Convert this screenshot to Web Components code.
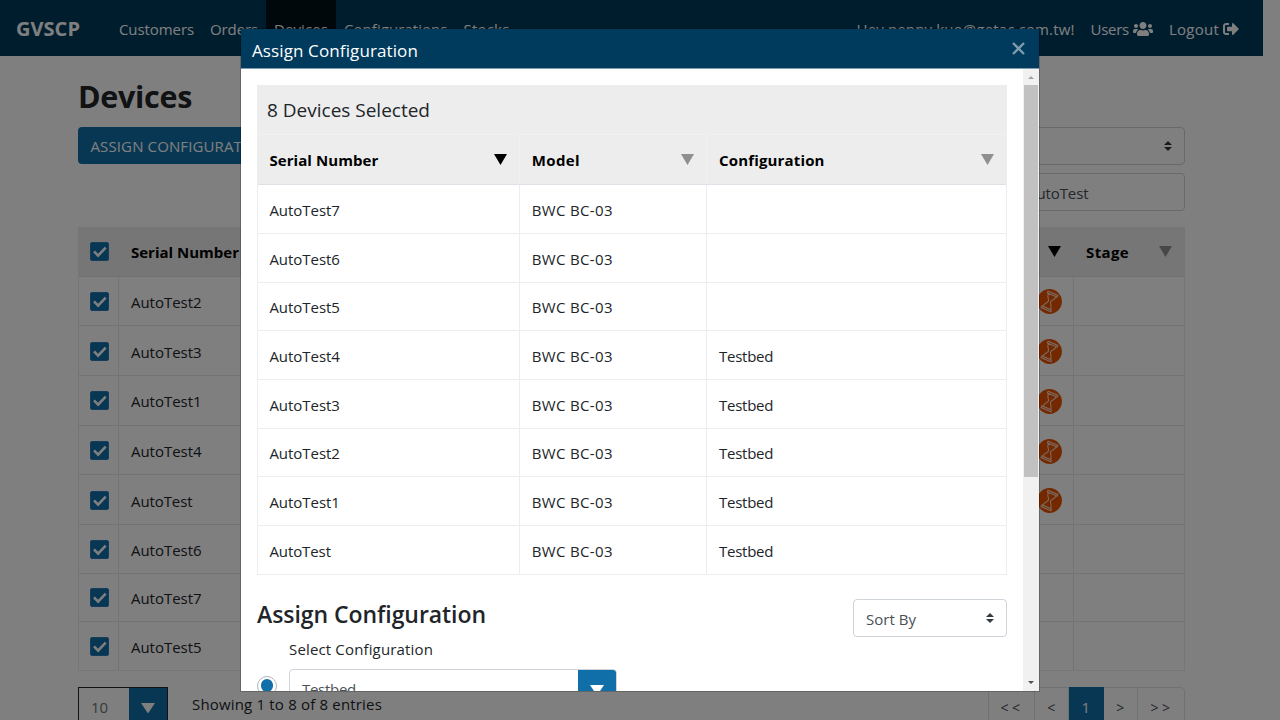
<!DOCTYPE html>
<html lang="en">
<head>
<meta charset="utf-8">
<title>GVSCP - Devices</title>
<style>
html,body{margin:0;height:720px;overflow:hidden;background:#fff}
body{font:400 15px/24px "Open Sans","Noto Sans",sans-serif;color:#212529}
</style>
</head>
<body>
<device-page></device-page>
<modal-layer></modal-layer>

<script>
function define(name, html) {
  const t = document.createElement('template');
  t.innerHTML = html;
  customElements.define(name, class extends HTMLElement {
    constructor() {
      super();
      this.attachShadow({ mode: 'open' }).append(t.content.cloneNode(true));
    }
  });
}

const caret = '<svg viewBox="0 0 4 5" width="8" height="10"><path fill="#343a40" d="M2 0L0 2h4zm0 5L0 3h4z"/></svg>';

define('check-box', `<style>:host{display:block;width:17px;height:17px;border:1px solid #2b7db8;border-radius:2px;background:#106ea8}svg{display:block}</style>
<svg width="17" height="17" viewBox="0 0 17 17"><path d="M3 8.4l4.1 4.2 7.6-8" fill="none" stroke="#fff" stroke-width="2.6"/></svg>`);

define('stage-icon', `<style>:host{display:block;width:25px;height:25px;margin-right:-1px}svg{display:block}</style>
<svg width="25" height="25" viewBox="0 0 25 25"><circle cx="12.5" cy="12.5" r="12.4" fill="#e65100"/>
<g transform="rotate(23 12.5 12.5)" fill="none" stroke="#fff" stroke-opacity=".75" stroke-width="1.1"><path d="M7.2 3.6h10.6v1.9H7.2zM7.2 19.5h10.6v1.9H7.2zM8.3 5.5c0 4 3 5 3 7s-3 3-3 7M16.7 5.5c0 4-3 5-3 7s3 3 3 7"/></g></svg>`);

define('sort-mark', `<style>:host{display:block;width:13px;height:11px;color:#8f8f8f}:host([active]){color:#000}svg{display:block}</style>
<svg width="13" height="11"><path fill="currentColor" d="M0 0h13L6.5 11z"/></svg>`);

define('select-box', `<style>:host{display:flex;box-sizing:border-box;height:38px;align-items:center;justify-content:space-between;padding:0 12px;border:1px solid #ced4da;border-radius:4px;color:#495057;background:#fff}svg{display:block}slot{display:block}.t{padding-top:3px}</style>
<span class="t"><slot></slot></span>${caret}`);

define('combo-box', `<style>:host{display:flex;box-sizing:border-box;height:38px;border:1px solid #ced4da;border-radius:4px;overflow:hidden;color:#495057;background:#fff}
.v{flex:1;padding:7px 12px}.b{width:38px;background:#106ea8;display:flex;justify-content:center}svg{margin-top:15px;display:block}</style>
<div class="v"><slot></slot></div><div class="b"><svg width="14" height="11"><path fill="#fff" d="M0 0h14L7 10.5z"/></svg></div>`);

define('top-bar', `<style>:host{display:flex;box-sizing:border-box;width:1263px;height:56px;background:#003a5d;color:#fff}
b{font-size:20px;width:103px;box-sizing:border-box;padding:17px 0 0 16px}
a{display:flex;padding:17px 8px 0;white-space:nowrap}.on{background:#001019}.gap{flex:1}.r{gap:4px}
svg{display:block;margin-top:4px}nav{display:flex;margin-left:8px}.me{display:flex;padding-right:16px}</style>
<b><ui-text w="64">GVSCP</ui-text></b>
<nav><a><ui-text w="75">Customers</ui-text></a><a><ui-text w="48">Orders</ui-text></a><a class="on"><ui-text w="54">Devices</ui-text></a><a><ui-text w="103.5">Configurations</ui-text></a><a><ui-text w="46">Stocks</ui-text></a></nav>
<span class="gap"></span>
<div class="me"><a><ui-text w="218">Hey penny.kuo@getac.com.tw!</ui-text></a>
<a class="r"><ui-text w="38.5">Users</ui-text><svg width="20" height="16" viewBox="0 0 640 512"><path fill="#fff" d="M96 224c35.3 0 64-28.7 64-64s-28.7-64-64-64-64 28.7-64 64 28.7 64 64 64zm448 0c35.3 0 64-28.7 64-64s-28.7-64-64-64-64 28.7-64 64 28.7 64 64 64zm32 32h-64c-17.6 0-33.5 7.1-45.1 18.6 40.3 22.1 68.9 62 75.1 109.4h66c17.7 0 32-14.3 32-32v-32c0-35.3-28.7-64-64-64zm-256 0c61.9 0 112-50.1 112-112S381.9 32 320 32 208 82.1 208 144s50.1 112 112 112zm76.8 32h-8.3c-20.8 10-43.9 16-68.5 16s-47.6-6-68.5-16h-8.3C179.6 288 128 339.6 128 403.2V432c0 26.5 21.5 48 48 48h288c26.5 0 48-21.5 48-48v-28.8c0-63.6-51.6-115.2-115.2-115.2zm-223.7-13.4C161.5 263.1 145.6 256 128 256H64c-35.3 0-64 28.7-64 64v32c0 17.7 14.3 32 32 32h65.9c6.3-47.4 34.9-87.3 75.2-109.4z"/></svg></a>
<a class="r"><ui-text w="50">Logout</ui-text><svg width="16" height="16" viewBox="0 0 512 512"><path fill="#fff" d="M497 273L329 441c-15 15-41 4.5-41-17v-96H152c-13.3 0-24-10.7-24-24v-96c0-13.3 10.7-24 24-24h136V88c0-21.4 25.9-32 41-17l168 168c9.3 9.4 9.3 24.6 0 34zM192 436v-40c0-6.6-5.4-12-12-12H96c-17.7 0-32-14.3-32-32V160c0-17.7 14.3-32 32-32h84c6.6 0 12-5.4 12-12V76c0-6.6-5.4-12-12-12H96c-53 0-96 43-96 96v192c0 53 43 96 96 96h84c6.6 0 12-5.4 12-12z"/></svg></a></div>`);

const pageRows = ['AutoTest2','AutoTest3','AutoTest1','AutoTest4','AutoTest','AutoTest6','AutoTest7','AutoTest5'];
const nameWidth = n => n.length === 9 ? 70.5 : 61.5;

define('device-grid', `<style>:host{display:block;border:1px solid #ececec;border-top:0;box-sizing:border-box}
.r{display:grid;grid-template-columns:40px 955px 1fr;height:48.6px;box-sizing:border-box;border-bottom:1px solid #e4e6e8}
.r:last-child{border:0;height:48px}.i{height:49.7px}.h{height:50px;background:#ededed;color:#000;font-weight:700;border-color:#dee2e6}
.r>div{border-right:1px solid #e4e6e8;box-sizing:border-box;display:flex;align-items:center;justify-content:space-between;padding:2px 12px 0}
.r>div:first-child{padding:1px 11px 0}.h>div:first-child{padding-top:0}.r>div:last-child{border:0}.h>div{border-color:#ebebeb}.h sort-mark{margin-top:-1px}</style>
<div class="r h"><div><check-box></check-box></div><div><ui-text w="108">Serial Number</ui-text><sort-mark active></sort-mark></div><div><ui-text w="43">Stage</ui-text><sort-mark></sort-mark></div></div>
${pageRows.map((n, i) => `<div class="r ${i < 5 ? 'i' : ''}"><div><check-box></check-box></div><div><ui-text w="${nameWidth(n)}">${n}</ui-text>${i < 5 ? '<stage-icon></stage-icon>' : ''}</div><div></div></div>`).join('')}`);

define('page-links', `<style>:host{display:flex;height:38px;box-sizing:border-box;border:1px solid #dee2e6;border-radius:4px;color:#495057}
span{box-sizing:border-box;text-align:center;padding-top:8px;border-right:1px solid #dee2e6;font-size:14px}
.s{width:34.5px}.w{width:46px}.w ui-text{position:relative;left:1px}.on{background:#106ea8;color:#fff;margin-top:-1px;border-color:#106ea8;font-size:15px}span:last-child{border:0}</style>
<span class="w"><ui-text w="23">&lt;&lt;</ui-text></span><span class="s"><ui-text w="8">&lt;</ui-text></span><span class="s on">1</span><span class="s"><ui-text w="8">&gt;</ui-text></span><span class="w"><ui-text w="23">&gt;&gt;</ui-text></span>`);

define('device-page', `<style>:host{display:block;height:720px;overflow:hidden}
main{width:1107px;margin-left:78px;display:flex;flex-direction:column}
h1{font-size:30.5px;line-height:38px;margin:21px 0 11.6px;font-weight:700;height:38px}
.tools{display:flex;justify-content:space-between;align-items:flex-start;height:100px}
.btn{background:#106ea8;border-radius:4px;color:#fff;height:37px;padding:0 12.5px;box-sizing:border-box;line-height:38px}
.f{display:flex;flex-direction:column;gap:8px;width:230px}
.in{height:38px;border:1px solid #ced4da;border-radius:4px;box-sizing:border-box;padding:7px 71px;color:#495057}
footer{display:flex;margin-top:15.5px;align-items:flex-start}
.len{display:flex;width:90px;height:38px;box-sizing:border-box;border:1px solid #212529;color:#6c757d}
.len span{flex:1;padding:7px 12px}.len i{width:38px;background:#106ea8;display:flex;justify-content:center}.len svg{margin-top:15px}
.info{margin:5px auto 0 24px}</style>
<top-bar></top-bar>
<main><h1><ui-text w="114">Devices</ui-text></h1>
<div class="tools"><div class="btn"><ui-text w="179">ASSIGN CONFIGURATION</ui-text></div><div class="f"><select-box><ui-text w="50">Sort By</ui-text></select-box><div class="in"><ui-text w="61.5">AutoTest</ui-text></div></div></div>
<device-grid></device-grid>
<footer><div class="len"><span>10</span><i><svg width="14" height="11"><path fill="#fff" d="M0 0h14L7 10.5z"/></svg></i></div><div class="info"><ui-text w="190">Showing 1 to 8 of 8 entries</ui-text></div><page-links></page-links></footer></main>`);

const picked = [['AutoTest7',0],['AutoTest6',0],['AutoTest5',0],['AutoTest4',1],['AutoTest3',1],['AutoTest2',1],['AutoTest1',1],['AutoTest',1]];
define('picked-table', `<style>:host{display:block;box-sizing:border-box;width:750px;border:1px solid #ebedef;margin-top:-.4px}
.c{height:49.3px;box-sizing:border-box;background:#ededed;font-size:19px;padding:12px 9px;border-bottom:1px solid #f1f1f1}
.r{display:grid;grid-template-columns:261.5px 187.3px 1fr;height:48.7px;box-sizing:border-box;border-bottom:1px solid #ebedef}
.r:last-child{border:0;height:47.7px}.h{height:50.3px;background:#ededed;color:#000;font-weight:700;border-color:#dee2e6}
.r>div{border-right:1px solid #ebedef;box-sizing:border-box;display:flex;align-items:center;justify-content:space-between;padding:2px 12px 0 12.3px}
.r>div:first-child{padding-left:11.4px}.r>div:last-child{border:0}.h>div{border-color:#f1f1f1;padding-top:0}sort-mark{margin-top:0}</style>
<div class="c"><ui-text w="163">8 Devices Selected</ui-text></div>
<div class="r h"><div><ui-text w="109">Serial Number</ui-text><sort-mark active></sort-mark></div><div><ui-text w="48">Model</ui-text><sort-mark></sort-mark></div><div><ui-text w="105.5">Configuration</ui-text><sort-mark></sort-mark></div></div>
${picked.map(([n, c]) => `<div class="r"><div><ui-text w="${nameWidth(n)}">${n}</ui-text></div><div><ui-text w="81">BWC BC-03</ui-text></div><div>${c ? '<ui-text w="54">Testbed</ui-text>' : ''}</div></div>`).join('')}`);

define('scroll-rail', `<style>:host{display:flex;flex-direction:column;width:16px;background:#f1f1f1;align-items:center}
i{width:14px;height:392px;background:#c1c1c1}.u,.d{height:16px;width:16px;display:block}.g{flex:1}</style>
<svg class="u" viewBox="0 0 16 16"><path fill="#a3a3a3" d="M5 10h6L8 7z"/></svg><i></i><span class="g"></span><svg class="d" viewBox="0 0 16 16"><path fill="#505050" d="M5 6h6L8 9z"/></svg>`);

define('radio-dot', `<style>:host{display:flex;box-sizing:border-box;width:20px;height:20px;border:1px solid #adb5bd;border-radius:50%;align-items:center;justify-content:center}i{width:12.5px;height:12.5px;border-radius:50%;background:#106ea8}</style><i></i>`);

define('modal-dialog', `<style>:host{display:flex;flex-direction:column;width:798px;height:662px;background:#fff;overflow:hidden;box-shadow:0 0 0 1px rgba(0,0,0,.2)}
header{height:40px;box-sizing:border-box;background:#003a5d;border-bottom:1px solid #7f9cae;color:#fff;display:flex;justify-content:space-between;font-size:17px;padding:10px 14px 0 11px;flex:none}
header svg{margin-top:3px}
.b{display:flex;flex:1;min-height:0}.c{flex:1;padding:16px;overflow:hidden;min-height:0}</style>
<header><slot name="title"></slot><svg width="13" height="13"><path d="M1 1l11 11M12 1L1 12" stroke="#7f9cae" stroke-width="2.4"/></svg></header>
<div class="b"><div class="c"><slot></slot></div><scroll-rail></scroll-rail></div>`);

define('assign-form', `<style>:host{display:block}
.t{display:flex;justify-content:space-between;margin-top:24px;height:38px}h2{margin:-1px 0 0;font-size:23px;font-weight:600;line-height:32px}select-box{width:154px}
label{display:block;margin:0 0 0 32px;height:32px}
.o{display:flex}radio-dot{margin:7px 12px 0 0}combo-box{width:328px}</style>
<div class="t"><h2><ui-text w="229">Assign Configuration</ui-text></h2><select-box><ui-text w="50">Sort By</ui-text></select-box></div>
<label><ui-text w="144">Select Configuration</ui-text></label>
<div class="o"><radio-dot></radio-dot><combo-box><ui-text w="54">Testbed</ui-text></combo-box></div>`);

define('modal-layer', `<style>:host{position:absolute;inset:0;background:rgba(0,0,0,.5);display:block;overflow:hidden}modal-dialog{margin:29px 0 0 241px}</style>
<modal-dialog><ui-text slot="title" w="166">Assign Configuration</ui-text><picked-table></picked-table><assign-form></assign-form></modal-dialog>`);

/* A single line of text whose tracking is set so that it takes the width in its w attribute. */
customElements.define('ui-text', class extends HTMLElement {
  constructor() {
    super();
    this.attachShadow({ mode: 'open' }).innerHTML = '<style>:host{display:inline-block;white-space:nowrap}</style><slot></slot>';
  }
  connectedCallback() {
    const range = document.createRange();
    range.selectNodeContents(this);
    const natural = range.getBoundingClientRect().width;
    const w = parseFloat(this.getAttribute('w'));
    if (w && natural) this.style.letterSpacing = ((w - natural) / this.textContent.length).toFixed(3) + 'px';
  }
});
</script>
</body>
</html>
